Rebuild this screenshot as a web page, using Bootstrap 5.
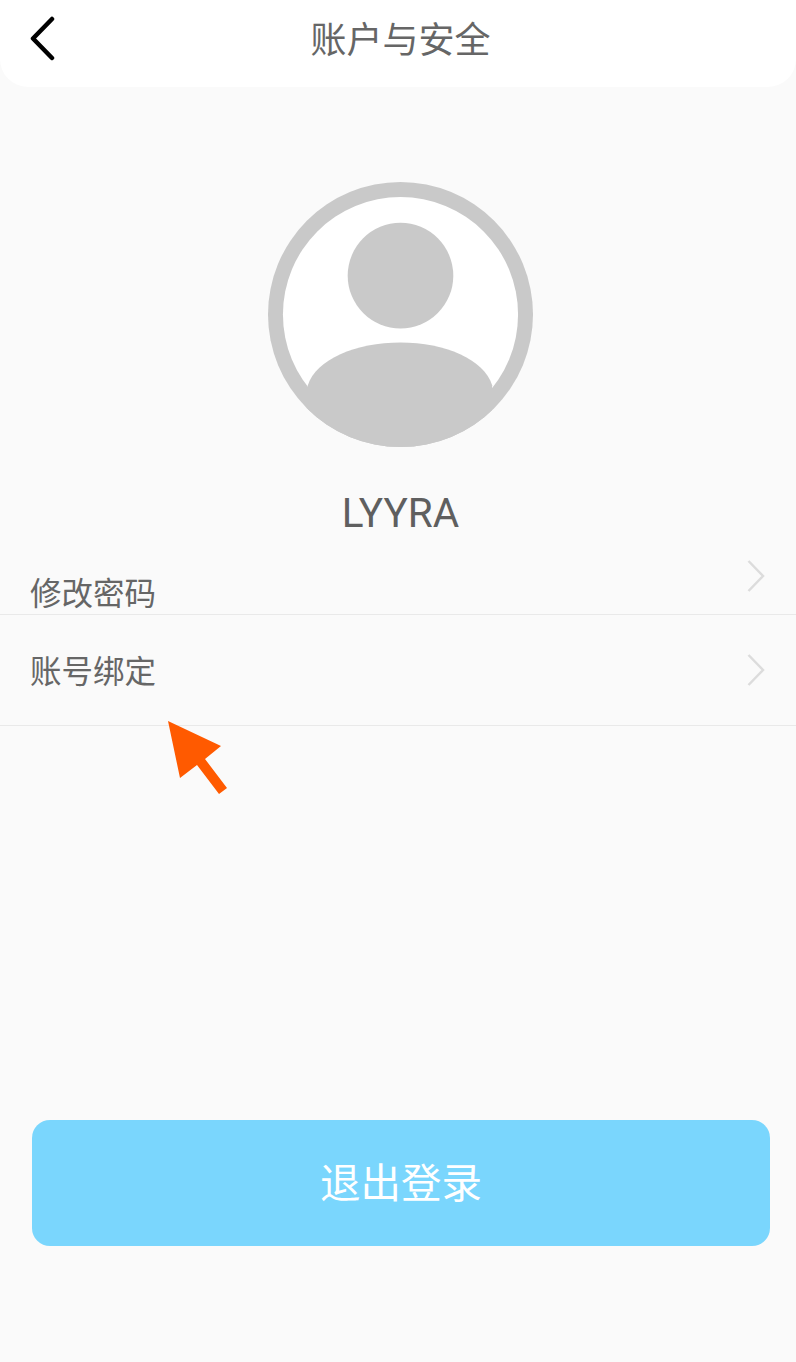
<!DOCTYPE html>
<html lang="zh-CN">
<head>
    <meta charset="UTF-8">
    <meta name="viewport" content="width=device-width, initial-scale=1.0">
    <title>账户与安全</title>
    <link href="https://cdn.jsdelivr.net/npm/bootstrap@5.3.0/dist/css/bootstrap.min.css" rel="stylesheet">
    <style>
        html, body {
            height: 1362px;
            overflow: hidden;
        }
        body {
            background-color: #fafafa;
            font-family: "Noto Sans CJK SC", "Liberation Sans", sans-serif;
            font-weight: 400;
            color: #666;
            position: relative;
        }
        .top-bar {
            height: 87px;
            background-color: #fff;
            border-radius: 0 0 28px 28px;
            padding-left: 29px;
        }
        .top-title {
            left: 5px;
            right: 0;
            top: 0;
            line-height: 74px;
            font-size: 36px;
            text-align: center;
        }
        .avatar-wrap {
            margin-top: 95px;
            padding-left: 5px;
        }
        .user-name {
            font-family: "Roboto", "Liberation Sans", sans-serif;
            font-size: 40.500px;
            line-height: 50px;
            margin-top: 41px;
            padding-left: 5px;
            color: #5f5f5f;
        }
        .list-group-flush .set-row {
            background: transparent;
            color: #666;
            font-size: 31.500px;
            padding: 0 31px 0 30px;
            border-color: #e9e9e9;
        }
        .set-row.first-row {
            height: 77px;
        }
        .set-row.first-row span {
            line-height: 46px;
        }
        .set-row.first-row svg {
            margin-top: 22px;
        }
        .list-group-flush .set-row.second-row {
            height: 111px;
            border-width: 0 0 1px;
            padding-bottom: 1px;
        }
        .logout-btn {
            width: 738px;
            height: 126px;
            margin: 394px 0 0 32px;
            padding-bottom: 10px;
            background-color: #7ad6fd;
            border: 0;
            border-radius: 18px;
            color: #fff;
            font-size: 40.500px;
        }
        .logout-btn:hover {
            background-color: #7ad6fd;
            color: #fff;
        }
        .hint-arrow {
            position: absolute;
            left: 160px;
            top: 715px;
        }
    </style>
</head>
<body>
    <div class="top-bar position-relative d-flex align-items-start">
        <svg width="30" height="46" viewBox="0 0 30 46" class="mt-3">
            <path d="M23 3 L4 22.500 L23 42" fill="none" stroke="#000" stroke-width="4.500" stroke-linecap="round" stroke-linejoin="round"/>
        </svg>
        <div class="top-title position-absolute">账户与安全</div>
    </div>

    <div class="avatar-wrap d-flex justify-content-center">
        <svg width="265" height="265" viewBox="0 0 266 266">
            <defs>
                <clipPath id="avatarClip"><circle cx="133" cy="133" r="133"/></clipPath>
            </defs>
            <circle cx="133" cy="133" r="133" fill="#c9c9c9"/>
            <circle cx="133" cy="133" r="118" fill="#fff"/>
            <circle cx="133" cy="94" r="53" fill="#c9c9c9"/>
            <path d="M40 204 C48 178 88 161 133 161 C178 161 217 178 225 204 L225 266 L40 266 Z" fill="#c9c9c9" clip-path="url(#avatarClip)"/>
        </svg>
    </div>

    <div class="user-name text-center">LYYRA</div>

    <div class="list-group list-group-flush">
        <div class="list-group-item set-row first-row d-flex justify-content-between">
            <span class="align-self-end">修改密码</span>
            <svg class="align-self-start" width="18" height="32" viewBox="0 0 18 32">
                <path d="M1.500 1 L16 16 L1.500 31" fill="none" stroke="#dcdcdc" stroke-width="2.500"/>
            </svg>
        </div>
        <div class="list-group-item set-row second-row d-flex justify-content-between align-items-center">
            <span>账号绑定</span>
            <svg width="18" height="32" viewBox="0 0 18 32">
                <path d="M1.500 1 L16 16 L1.500 31" fill="none" stroke="#dcdcdc" stroke-width="2.500"/>
            </svg>
        </div>
    </div>

    <button type="button" class="btn logout-btn d-block">退出登录</button>

    <svg class="hint-arrow" width="76" height="86" viewBox="160 715 76 86">
        <polygon points="168,721 221,746 205,759 227,788 219,794 197,765 180,778" fill="#ff5a00"/>
    </svg>

    <script src="https://cdn.jsdelivr.net/npm/bootstrap@5.3.0/dist/js/bootstrap.bundle.min.js"></script>
</body>
</html>
